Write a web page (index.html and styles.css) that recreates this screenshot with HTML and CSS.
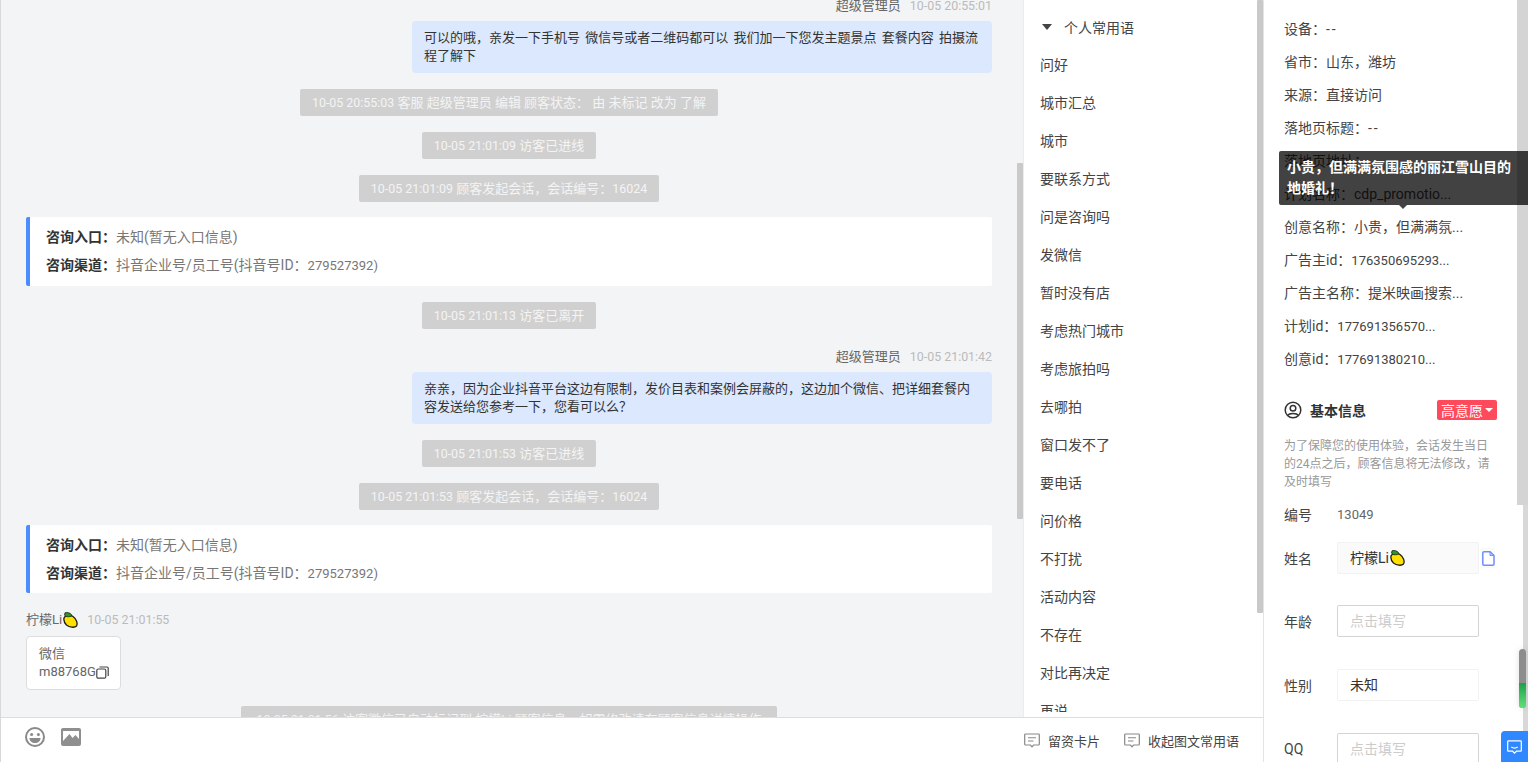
FILE: index.html
```html
<!DOCTYPE html>
<html lang="zh">
<head>
<meta charset="utf-8">
<title>会话</title>
<link rel="stylesheet" href="styles.css">
</head>
<body>
<div class="app">
  <div class="main">
    <div class="top">
      <section class="chat">
        <div class="chat-flow">
          <div class="meta"><span class="who">超级管理员</span><span class="time">10-05 20:55:01</span></div>
          <div class="bubble">可以的哦，亲发一下手机号 微信号或者二维码都可以 我们加一下您发主题景点 套餐内容 拍摄流程了解下</div>
          <div class="sys"><span class="num">10-05 20:55:03</span> 客服 超级管理员 编辑 顾客状态： 由 未标记 改为 了解</div>
          <div class="sys"><span class="num">10-05 21:01:09</span> 访客已进线</div>
          <div class="sys"><span class="num">10-05 21:01:09</span> 顾客发起会话，会话编号：<span class="num">16024</span></div>
          <div class="card">
            <p><b>咨询入口：</b>未知(暂无入口信息)</p>
            <p><b>咨询渠道：</b>抖音企业号/员工号(抖音号ID：<span class="num">279527392)</span></p>
          </div>
          <div class="sys"><span class="num">10-05 21:01:13</span> 访客已离开</div>
          <div class="meta"><span class="who">超级管理员</span><span class="time">10-05 21:01:42</span></div>
          <div class="bubble">亲亲，因为企业抖音平台这边有限制，发价目表和案例会屏蔽的，这边加个微信、把详细套餐内容发送给您参考一下，您看可以么？</div>
          <div class="sys"><span class="num">10-05 21:01:53</span> 访客已进线</div>
          <div class="sys"><span class="num">10-05 21:01:53</span> 顾客发起会话，会话编号：<span class="num">16024</span></div>
          <div class="card card-low">
            <p><b>咨询入口：</b>未知(暂无入口信息)</p>
            <p><b>咨询渠道：</b>抖音企业号/员工号(抖音号ID：<span class="num">279527392)</span></p>
          </div>
          <div class="visitor"><span class="who">柠檬Li</span><svg class="lemon" viewBox="0 0 16 16"><path d="M2 6C3 3 8 2.500 11 4.500c3.500 2.500 5 7 3.500 9.500-2 2-7 1.500-10-1C2.500 11 1.500 8.500 2 6z" fill="#ffe000" stroke="#1c1c1c" stroke-width="1.300"/><path d="M3 .8C5 0 9 .8 10 3.500 7.500 5.500 3.500 5 2.500 3z" fill="#2a9a1e" stroke="#1c1c1c" stroke-width=".8"/></svg><span class="time">10-05 21:01:55</span></div>
          <div class="wx">
            <div>微信</div>
            <div class="wx-id">m88768G<svg class="copy" viewBox="0 0 13 13"><rect x=".8" y="3" width="9" height="9.200" rx="1.500" fill="#fff" stroke="#444" stroke-width="1.200"/><path d="M3.500 1h7.500a1.200 1.200 0 0 1 1.200 1.200V10" fill="none" stroke="#444" stroke-width="1.200"/></svg></div>
          </div>
          <div class="sys sys-long"><span class="num">10-05 21:01:56</span> 访客微信已自动标记到 柠檬Li 顾客信息，如需修改请在顾客信息详情操作</div>
        </div>
        <i class="bar bar-chat"></i>
      </section>
      <aside class="phrases">
        <div class="ph-list">
          <div class="ph-head"><i class="caret"></i>个人常用语</div>
          <div class="ph-item">问好</div>
          <div class="ph-item">城市汇总</div>
          <div class="ph-item">城市</div>
          <div class="ph-item">要联系方式</div>
          <div class="ph-item">问是咨询吗</div>
          <div class="ph-item">发微信</div>
          <div class="ph-item">暂时没有店</div>
          <div class="ph-item">考虑热门城市</div>
          <div class="ph-item">考虑旅拍吗</div>
          <div class="ph-item">去哪拍</div>
          <div class="ph-item">窗口发不了</div>
          <div class="ph-item">要电话</div>
          <div class="ph-item">问价格</div>
          <div class="ph-item">不打扰</div>
          <div class="ph-item">活动内容</div>
          <div class="ph-item">不存在</div>
          <div class="ph-item">对比再决定</div>
          <div class="ph-item">再说</div>
        </div>
        <i class="bar bar-ph"></i>
      </aside>
    </div>
    <footer class="tools">
      <svg class="ic-face" viewBox="0 0 22 22"><circle cx="11" cy="11" r="9" fill="none" stroke="#8a8a8a" stroke-width="2"/><circle cx="7.600" cy="8.500" r="1.500" fill="#8a8a8a"/><circle cx="14.400" cy="8.500" r="1.500" fill="#8a8a8a"/><path d="M5.500 12h11c0 3.200-2.500 5-5.500 5s-5.500-1.800-5.500-5z" fill="#8a8a8a"/></svg>
      <svg class="ic-pic" viewBox="0 0 20 18"><rect width="20" height="18" rx="2" fill="#8f8f8f"/><path d="M2 14V3h16v8l-3.500-4-3 3-3-4L2 13z" fill="#fff"/></svg>
      <span class="spacer"></span>
      <span class="tool"><svg class="ic-msg" viewBox="0 0 16 15"><path d="M1.500 1h13a.8.8 0 0 1 .8.800v9.400a.8.8 0 0 1-.8.800H9.500L8 13.800 6.500 12h-5a.8.8 0 0 1-.8-.8V1.800a.8.8 0 0 1 .8-.8z" fill="none" stroke="#888" stroke-width="1.200"/><path d="M4 4.800h8M4 8h5.500" stroke="#888" stroke-width="1.100"/></svg>留资卡片</span>
      <span class="tool"><svg class="ic-msg" viewBox="0 0 16 15"><path d="M1.500 1h13a.8.8 0 0 1 .8.800v9.400a.8.8 0 0 1-.8.800H9.500L8 13.800 6.500 12h-5a.8.8 0 0 1-.8-.8V1.800a.8.8 0 0 1 .8-.8z" fill="none" stroke="#888" stroke-width="1.200"/><path d="M4 4.800h8M4 8h5.500" stroke="#888" stroke-width="1.100"/></svg>收起图文常用语</span>
    </footer>
  </div>
  <aside class="info">
    <div class="info-flow">
      <div class="kv">设备：<span class="dash">--</span></div>
      <div class="kv">省市：山东，潍坊</div>
      <div class="kv">来源：直接访问</div>
      <div class="kv">落地页标题：<span class="dash">--</span></div>
      <div class="kv">落地页地址：</div>
      <div class="kv">计划名称：cdp_promotio...</div>
      <div class="kv">创意名称：小贵，但满满氛...</div>
      <div class="kv">广告主id：<span class="num">176350695293...</span></div>
      <div class="kv">广告主名称：提米映画搜索...</div>
      <div class="kv">计划id：<span class="num">177691356570...</span></div>
      <div class="kv">创意id：<span class="num">177691380210...</span></div>
      <div class="base-head">
        <svg class="ic-user" viewBox="0 0 18 18"><circle cx="9" cy="9" r="7.800" fill="none" stroke="#333" stroke-width="1.500"/><circle cx="9" cy="7.200" r="2.800" fill="none" stroke="#333" stroke-width="1.500"/><path d="M3.800 14.500C5 11.800 13 11.800 14.200 14.500" fill="none" stroke="#333" stroke-width="1.500"/></svg>
        <b>基本信息</b>
        <span class="spacer"></span>
        <span class="tag">高意愿<i class="tag-caret"></i></span>
      </div>
      <p class="hint">为了保障您的使用体验，会话发生当日的24点之后，顾客信息将无法修改，请及时填写</p>
      <div class="field field-no"><label>编号</label><span class="no num">13049</span></div>
      <div class="field field-name"><label>姓名</label><div class="inp inp-fill">柠檬Li<svg class="lemon" viewBox="0 0 16 16"><path d="M2 6C3 3 8 2.500 11 4.500c3.500 2.500 5 7 3.500 9.500-2 2-7 1.500-10-1C2.500 11 1.500 8.500 2 6z" fill="#ffe000" stroke="#1c1c1c" stroke-width="1.300"/><path d="M3 .8C5 0 9 .8 10 3.500 7.500 5.500 3.500 5 2.500 3z" fill="#2a9a1e" stroke="#1c1c1c" stroke-width=".8"/></svg></div><span class="doc-box"><svg class="ic-doc" viewBox="0 0 14 15"><path d="M3 .8h6l4 3.700V13a1.200 1.200 0 0 1-1.200 1.200H3A1.200 1.200 0 0 1 1.800 13V2A1.200 1.200 0 0 1 3 .8z" fill="#fff" stroke="#6d8ffb" stroke-width="1.500"/><path d="M9 .8v3.700h4z" fill="#b9ccff" stroke="#6d8ffb" stroke-width="1"/></svg></span></div>
      <div class="field field-age"><label>年龄</label><div class="inp inp-empty">点击填写</div></div>
      <div class="field"><label>性别</label><div class="inp inp-plain">未知</div></div>
      <div class="field"><label>QQ</label><div class="inp inp-empty">点击填写</div></div>
    </div>
    <i class="thumb-info"></i>
  </aside>
</div>
<div class="tip">小贵，但满满氛围感的丽江雪山目的地婚礼！<i class="tip-arrow"></i></div>
<div class="pill"><i class="pill-green"></i></div>
<div class="help"><svg viewBox="0 0 16 15"><path d="M1.500 1h13a.8.8 0 0 1 .8.800v9.400a.8.8 0 0 1-.8.800H10L8 14 6 12H1.500a.8.8 0 0 1-.8-.8V1.800a.8.8 0 0 1 .8-.8z" fill="none" stroke="#fff" stroke-width="1.300"/><path d="M4.500 7.500c2 1.300 5 1.300 7 0" fill="none" stroke="#fff" stroke-width="1.200"/></svg></div>
</body>
</html>
```
FILE: styles.css
```css
* { box-sizing: border-box; }
html, body { margin: 0; height: 762px; overflow: hidden; }
body {
  font-family: Roboto, "Noto Sans CJK SC", "Noto Sans", sans-serif;
  font-size: 13px;
  color: #333;
  background: #fff;
  position: relative;
}
p { margin: 0; }
i { display: block; }
.num { font-size: .955em; }
.card .num, .info .num { font-size: .93em; }
.dash { letter-spacing: 2px; }
.app { display: flex; height: 762px; border-left: 1px solid #d8d8d8; }
.main { width: 1263px; flex: none; display: flex; flex-direction: column; border-right: 1px solid #e4e4e4; }
.top { flex: 1; display: flex; min-height: 0; }
.chat { width: 1022px; flex: none; background: #f3f4f6; position: relative; overflow: hidden; }
.chat-flow { padding: 0 31px 0 25px; display: flex; flex-direction: column; align-items: center; margin-top: -6px; }
.meta { align-self: flex-end; height: 18px; line-height: 20px; margin-top: 2px; margin-bottom: 7px; display: flex; gap: 9px; }
.who { color: #666; }
.time { color: #bbb; font-size: 12.400px; }
.bubble {
  align-self: flex-end;
  width: 580px;
  padding: 8px 12px;
  background: #dbe8fd;
  border-radius: 4px;
  line-height: 18px;
  height: 52px;
  color: #333;
  margin-bottom: 16px;
  word-spacing: 2px;
}
.sys {
  height: 27px;
  line-height: 27px;
  padding: 0 12px;
  background: #d0d0d0;
  border-radius: 2px;
  color: #f4f4f4;
  white-space: nowrap;
  margin-bottom: 16px;
}
.sys-long { padding: 0 15px; }
.card {
  align-self: stretch;
  height: 69px;
  background: #fff;
  border-left: 4px solid #4b8dff;
  border-radius: 2px;
  padding: 6px 16px;
  margin-top: -1px;
  margin-bottom: 16px;
  color: #777;
  font-size: 14px;
  line-height: 28px;
}
.card-low { height: 68px; }
.card b { color: #333; font-weight: 700; }
.visitor {
  align-self: flex-start;
  display: flex;
  align-items: center;
  height: 18px;
  line-height: 20px;
  margin-top: 2px;
  margin-bottom: 7px;
}
.visitor .time { margin-left: 9px; }
.lemon { width: 16px; height: 16px; flex: none; }
.wx {
  align-self: flex-start;
  width: 95px;
  height: 54px;
  padding: 8px 12px;
  background: #fff;
  border: 1px solid #ddd;
  border-radius: 4px;
  color: #666;
  line-height: 18px;
  margin-bottom: 16px;
}
.wx-id { display: flex; align-items: center; }
.copy { width: 13px; height: 13px; flex: none; }
.bar { position: absolute; width: 6px; background: #c9c9c9; border-radius: 1px; }
.bar-chat { left: 1016px; top: 163px; height: 356px; }
.phrases { flex: 1; position: relative; overflow: hidden; background: #fff; border-left: 1px solid #ececec; padding-left: 16px; }
.ph-list { height: 712px; overflow: hidden; padding-top: 17px; }
.ph-head { display: flex; align-items: center; height: 20px; margin-bottom: 9px; font-size: 14px; color: #444; }
.caret { width: 0; height: 0; border: 5px solid transparent; border-top: 6px solid #444; border-bottom: 0; margin: 0 12px 0 2px; }
.ph-item { height: 38px; line-height: 38px; font-size: 14px; color: #444; }
.bar-ph { left: 233px; top: 0; height: 613px; }
.tools { height: 45px; flex: none; display: flex; align-items: flex-start; background: #fff; border-top: 1px solid #ddd; padding: 0 24px 0 23px; }
.spacer { flex: 1; }
.ic-face { width: 22px; height: 22px; margin-top: 8px; }
.ic-pic { width: 20px; height: 18px; margin: 10px 0 0 15px; }
.tool { display: flex; align-items: center; height: 20px; margin-top: 12px; margin-left: 24px; color: #444; }
.ic-msg { width: 16px; height: 15px; margin-right: 8px; }
.info { flex: 1; position: relative; overflow: hidden; background: #fff; font-size: 14px; }
.info-flow { width: 253px; padding: 0 0 0 20px; }
.kv { height: 33px; line-height: 33px; color: #444; white-space: nowrap; }
.kv:first-child { margin-top: 13px; }
.base-head { display: flex; align-items: center; height: 24px; margin-top: 22px; padding-right: 20px; }
.base-head b { color: #333; font-weight: 700; }
.ic-user { width: 18px; height: 18px; margin-right: 8px; }
.tag { display: flex; align-items: center; height: 20px; padding: 0 4px; background: #ff4a5b; color: #fff; border-radius: 2px; }
.tag-caret { width: 0; height: 0; border: 4px solid transparent; border-top: 4px solid #fff; border-bottom: 0; margin-left: 2px; }
.hint { margin-top: 15px; width: 210px; font-size: 12px; line-height: 18px; color: #999; }
.field { display: flex; align-items: center; height: 32px; margin-top: 32px; color: #444; }
.field-no { height: 20px; margin-top: 13px; }
.field-name { margin-top: 18px; }
.field-age { margin-top: 31px; }
.field label { width: 53px; flex: none; }
.no { color: #666; }
.inp { width: 142px; height: 32px; line-height: 30px; padding: 0 12px; border: 1px solid #d4d4d4; border-radius: 2px; display: flex; align-items: center; }
.inp-fill { background: #fafafa; border-color: #f2f2f2; color: #333; }
.inp-plain { border-color: #f2f2f2; color: #333; }
.inp-empty { color: #ccc; }
.doc-box { display: flex; align-items: center; justify-content: center; width: 14px; height: 20px; margin-left: 2px; background: #fafafa; }
.ic-doc { width: 14px; height: 15px; }
.thumb-info { position: absolute; left: 253px; top: 0; width: 11px; height: 505px; background: #d4d4d4; }
.info::after { content: ""; position: absolute; left: 259px; top: 505px; width: 5px; height: 257px; background: #d8d8d8; }
.tip {
  position: absolute;
  left: 1279px;
  top: 151px;
  width: 249px;
  height: 54px;
  padding: 6px 8px;
  background: rgba(0, 0, 0, .74);
  color: #fff;
  font-weight: 700;
  font-size: 14px;
  line-height: 21px;
  border-radius: 2px 0 0 2px;
}
.tip-arrow { position: absolute; left: 120px; top: 54px; width: 0; height: 0; border: 4px solid transparent; border-top: 4px solid #444; border-bottom: 0; }
.pill {
  position: absolute;
  left: 1519px;
  top: 649px;
  width: 7px;
  height: 59px;
  background: #8d8d8d;
  border-radius: 4px;
  overflow: hidden;
  box-shadow: 0 0 6px rgba(0, 0, 0, .12);
}
.pill-green { margin-top: 34px; height: 25px; background: linear-gradient(#1da04a, #62e078); }
.help {
  position: absolute;
  left: 1501px;
  top: 731px;
  width: 27px;
  height: 31px;
  background: #2f88ff;
  border-radius: 4px 0 0 0;
  display: flex;
  justify-content: center;
  padding-top: 9px;
}
.help svg { width: 15px; height: 14px; }
```
